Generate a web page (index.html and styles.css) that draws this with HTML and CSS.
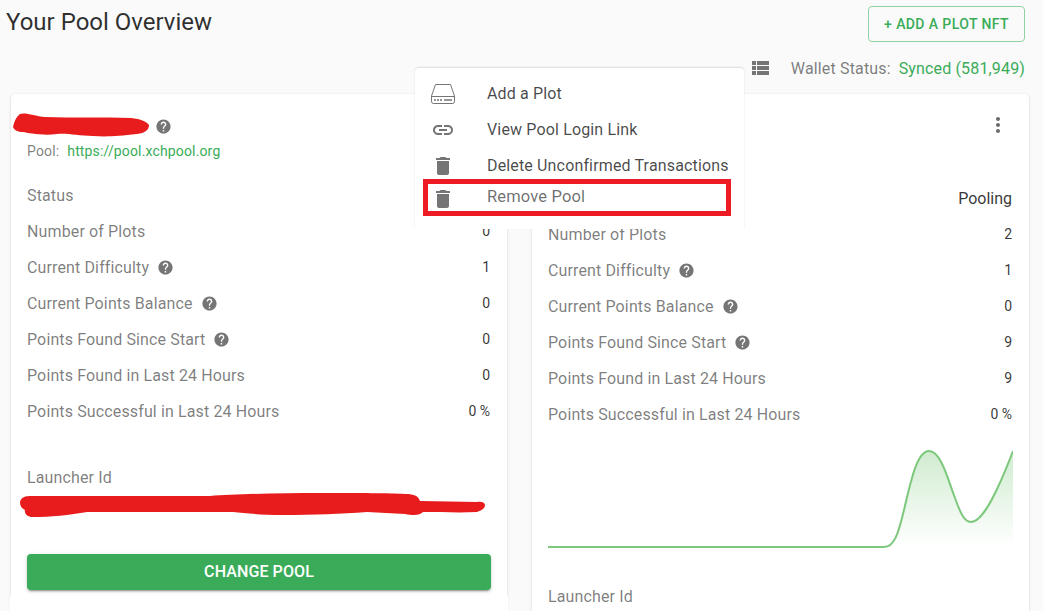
FILE: index.html
```html
<!DOCTYPE html>
<html lang="en">
<head>
<meta charset="utf-8">
<title>Your Pool Overview</title>
<link rel="stylesheet" href="styles.css">
</head>
<body>
<svg class="defs" width="0" height="0"><defs><path id="q" d="M12 2C6.480 2 2 6.480 2 12s4.480 10 10 10 10-4.480 10-10S17.520 2 12 2zm1 17h-2v-2h2v2zm2.070-7.750l-.9.920C13.450 12.900 13 13.500 13 15h-2v-.5c0-1.100.45-2.100 1.170-2.830l1.240-1.260c.37-.36.59-.86.59-1.410 0-1.100-.9-2-2-2s-2 .9-2 2H8c0-2.210 1.790-4 4-4s4 1.790 4 4c0 .88-.36 1.680-.93 2.250z"/></defs></svg>
<main class="page">
  <header class="top">
    <h1 class="page-title">Your Pool Overview</h1>
    <button class="outline-btn">+ Add a Plot NFT</button>
  </header>
  <div class="status-bar">
    <svg class="list-icon" viewBox="0 0 24 24"><path d="M4 14h4v-4H4v4zm0 5h4v-4H4v4zM4 9h4V5H4v4zm5 5h12v-4H9v4zm0 5h12v-4H9v4zM9 5v4h12V5H9z"/></svg>
    <span class="wallet-label">Wallet Status:</span>
    <span class="wallet-value">Synced (581,949)</span>
  </div>
  <section class="cards">
    <article class="card card-left">
      <div class="card-head">
        <svg class="help help-title" viewBox="0 0 24 24"><use href="#q"/></svg>
      </div>
      <div class="pool-line"><span class="pool-label">Pool:</span><span class="pool-url">https://pool.xchpool.org</span></div>
      <div class="rows rows-left">
        <div class="row"><span class="label">Status</span></div>
        <div class="row"><span class="label">Number of Plots</span><span class="value">0</span></div>
        <div class="row"><span class="label">Current Difficulty<svg class="help" viewBox="0 0 24 24"><use href="#q"/></svg></span><span class="value">1</span></div>
        <div class="row"><span class="label">Current Points Balance<svg class="help" viewBox="0 0 24 24"><use href="#q"/></svg></span><span class="value">0</span></div>
        <div class="row"><span class="label">Points Found Since Start<svg class="help" viewBox="0 0 24 24"><use href="#q"/></svg></span><span class="value">0</span></div>
        <div class="row"><span class="label">Points Found in Last 24 Hours</span><span class="value">0</span></div>
        <div class="row"><span class="label">Points Successful in Last 24 Hours</span><span class="value">0 %</span></div>
      </div>
      <div class="launcher launcher-left">Launcher Id</div>
      <div class="launcher-gap"></div>
      <button class="change-btn">Change Pool</button>
    </article>
    <article class="card card-right">
      <div class="card-head card-head-right">
        <svg class="more" viewBox="0 0 24 24"><path d="M12 8c1.100 0 2-.9 2-2s-.9-2-2-2-2 .9-2 2 .9 2 2 2zm0 2c-1.100 0-2 .9-2 2s.9 2 2 2 2-.9 2-2-.9-2-2-2zm0 6c-1.100 0-2 .9-2 2s.9 2 2 2 2-.9 2-2-.9-2-2-2z"/></svg>
      </div>
      <div class="pool-line"></div>
      <div class="rows rows-right">
        <div class="row row-end"><span class="value-big">Pooling</span></div>
        <div class="row"><span class="label">Number of Plots</span><span class="value">2</span></div>
        <div class="row"><span class="label">Current Difficulty<svg class="help" viewBox="0 0 24 24"><use href="#q"/></svg></span><span class="value">1</span></div>
        <div class="row"><span class="label">Current Points Balance<svg class="help" viewBox="0 0 24 24"><use href="#q"/></svg></span><span class="value">0</span></div>
        <div class="row"><span class="label">Points Found Since Start<svg class="help" viewBox="0 0 24 24"><use href="#q"/></svg></span><span class="value">9</span></div>
        <div class="row"><span class="label">Points Found in Last 24 Hours</span><span class="value">9</span></div>
        <div class="row"><span class="label">Points Successful in Last 24 Hours</span><span class="value">0 %</span></div>
      </div>
      <svg class="chart" viewBox="0 0 465 100" preserveAspectRatio="none">
        <defs>
          <linearGradient id="fade" x1="0" y1="0" x2="0" y2="1">
            <stop offset="0" stop-color="#7cc87c" stop-opacity=".36"/>
            <stop offset="1" stop-color="#7cc87c" stop-opacity="0"/>
          </linearGradient>
        </defs>
        <path fill="url(#fade)" d="M336 97C346 97 350 85 356 60C364 25 370 1 381 1C393 1 400 30 407 48C412 62 416 72 423 72C436 72 452 35 465 1V97Z"/>
        <path fill="none" stroke="#7cc87c" stroke-width="2" d="M0 97H336C346 97 350 85 356 60C364 25 370 1 381 1C393 1 400 30 407 48C412 62 416 72 423 72C436 72 452 35 465 1"/>
      </svg>
      <div class="launcher">Launcher Id</div>
    </article>
  </section>
</main>

<nav class="menu">
  <div class="menu-item">
    <svg class="menu-icon drive" viewBox="0 0 24 20"><path fill="none" stroke="#757575" stroke-width="1" d="M4.500 .5h15L23.500 12v5.500a2 2 0 0 1-2 2h-19a2 2 0 0 1-2-2V12zM.5 12.500h23"/><path fill="#757575" d="M3 15.300h2v1.400H3zM6 15.300h2v1.400H6zM9 15.300h2v1.400H9zM13 15.300h8v1.400h-8z"/></svg>
    <span>Add a Plot</span>
  </div>
  <div class="menu-item">
    <svg class="menu-icon" viewBox="0 0 24 24"><path fill="#757575" d="M3.900 12c0-1.710 1.390-3.100 3.100-3.100h4V7H7c-2.760 0-5 2.240-5 5s2.240 5 5 5h4v-1.900H7c-1.710 0-3.100-1.390-3.100-3.100zM8 13h8v-2H8v2zm9-6h-4v1.900h4c1.710 0 3.100 1.390 3.100 3.100s-1.390 3.100-3.100 3.100h-4V17h4c2.760 0 5-2.240 5-5s-2.240-5-5-5z"/></svg>
    <span>View Pool Login Link</span>
  </div>
  <div class="menu-item">
    <svg class="menu-icon" viewBox="0 0 24 24"><path fill="#757575" d="M6 19c0 1.100.9 2 2 2h8c1.100 0 2-.9 2-2V7H6v12zM19 4h-3.500l-1-1h-5l-1 1H5v2h14V4z"/></svg>
    <span>Delete Unconfirmed Transactions</span>
  </div>
  <div class="menu-item menu-item-last">
    <svg class="menu-icon" viewBox="0 0 24 24"><path fill="#757575" d="M6 19c0 1.100.9 2 2 2h8c1.100 0 2-.9 2-2V7H6v12zM19 4h-3.500l-1-1h-5l-1 1H5v2h14V4z"/></svg>
    <span>Remove Pool</span>
  </div>
</nav>
<div class="highlight"></div>

<svg class="scribble scribble-name" viewBox="0 0 136 24"><path fill="#e81c1c" d="M0 14C1 9 3 4 7 1C12-1 22 3 32 4C60 5 90 4 118 5C128 6 134 9 136 12C136 17 132 20 124 21C105 23 95 24 80 23C65 23 55 20 44 21C30 23 15 20 10 19C5 19 1 17 0 14Z"/></svg>
<svg class="scribble scribble-id" viewBox="0 0 466 24"><path fill="#e81c1c" d="M0 9C1 4 5 3 12 3H190C215 1 260 0 300 0C340 0 370 0 385 1C395 1 398 3 400 8L457 9C462 8 465 10 465 12C465 16 460 18 457 19C440 20 420 19 403 19C400 22 395 23 385 21L347 19C320 21 295 22 263 22C240 22 225 20 213 19C170 19 120 19 67 19C50 22 30 24 13 24C7 24 4 20 5 17C1 15 0 12 0 9Z"/></svg>
</body>
</html>
```
FILE: styles.css
```css
* { box-sizing: border-box; }
html, body { margin: 0; height: 611px; overflow: hidden; }
body {
  background: #fafafa;
  font-family: Roboto, "Liberation Sans", sans-serif;
  color: rgba(0, 0, 0, .87);
  position: relative;
}
.page { padding: 0 14px 0 11px; }
.top {
  display: flex;
  justify-content: space-between;
  align-items: flex-start;
  margin-left: -5px;
  margin-right: -10px;
  padding: 6px 14px 0 0;
  height: 52px;
}
.page-title { margin: 0; font-size: 24px; font-weight: 400; line-height: 32px; color: rgba(0,0,0,.82); }
.outline-btn {
  width: 157px;
  height: 36px;
  border: 1px solid #8fd3a3;
  border-radius: 4px;
  background: transparent;
  color: #3aac59;
  font: 500 14px/1 Roboto, sans-serif;
  letter-spacing: .4px;
  text-transform: uppercase;
}
.status-bar {
  display: flex;
  justify-content: flex-end;
  align-items: center;
  height: 32px;
  margin-right: 4px;
  font-size: 16px;
  letter-spacing: .15px;
}
.list-icon { width: 24px; height: 24px; fill: #757575; margin-right: 19px; }
.wallet-label { color: rgba(0,0,0,.52); margin-right: 8px; }
.wallet-value { color: #3aac59; }
.cards {
  margin-top: 10px;
  display: grid;
  grid-template-columns: 496px 497px;
  gap: 25px;
  height: 517px;
}
.card {
  position: relative;
  background: #fff;
  border-radius: 4px 4px 0 0;
  box-shadow: 0 1px 3px rgba(0,0,0,.14), 0 0 1px rgba(0,0,0,.1);
  padding: 16px 16px 0;
  display: flex;
  flex-direction: column;
}
.card-left::after {
  content: "";
  position: absolute;
  left: -1px;
  right: -1px;
  bottom: 0;
  height: 15px;
  background: #fff;
}
.card-right { padding-right: 17px; }
.card-head { height: 32px; display: flex; align-items: center; padding-left: 128px; }
.card-head-right { justify-content: flex-end; padding-right: 2px; height: 30px; margin-bottom: 2px; }
.help { width: 17px; height: 17px; fill: #757575; margin-left: 8px; flex: none; }
.help-title { margin-left: 0; }
.more { width: 24px; height: 24px; fill: #6b6b6b; }
.pool-line { height: 18px; display: flex; align-items: center; font-size: 14px; letter-spacing: .15px; }
.pool-label { color: rgba(0,0,0,.52); margin-right: 8px; }
.pool-url { color: #3aac59; }
.rows { margin-top: 17px; }
.rows-left { margin-right: 1px; }
.rows-right { margin-top: 20px; }
.row { height: 36px; display: flex; align-items: center; justify-content: space-between; }
.row-end { justify-content: flex-end; }
.label { display: flex; align-items: center; font-size: 16px; letter-spacing: .13px; color: rgba(0,0,0,.52); }
.value { font-size: 14px; color: rgba(0,0,0,.8); }
.value-big { font-size: 16px; color: rgba(0,0,0,.8); }
.launcher { height: 20px; line-height: 20px; font-size: 16px; letter-spacing: .13px; color: rgba(0,0,0,.52); }
.launcher-left { margin-top: 39px; }
.launcher-gap { height: 66px; }
.change-btn {
  height: 36px;
  width: 100%;
  flex: none;
  border: 0;
  border-radius: 4px;
  background: #3aac59;
  color: #fff;
  font: 500 16px/1 Roboto, sans-serif;
  letter-spacing: .1px;
  text-transform: uppercase;
  box-shadow: 0 3px 1px -2px rgba(0,0,0,.2), 0 2px 2px rgba(0,0,0,.14), 0 1px 5px rgba(0,0,0,.12);
}
.chart { display: block; flex: none; width: 465px; height: 100px; margin: 18px 0 37px; }
.defs { position: absolute; }
.menu {
  position: absolute;
  left: 415px;
  top: 68px;
  width: 329px;
  height: 161px;
  background: #fff;
  border-radius: 4px 4px 0 0;
  box-shadow: 0 -1px 2px rgba(0,0,0,.12);
  padding-top: 7px;
}
.menu-item {
  height: 36px;
  display: flex;
  align-items: center;
  padding-left: 16px;
  font-size: 16px;
  letter-spacing: .15px;
  color: rgba(0,0,0,.72);
}
.menu-item-last { height: 28px; margin-top: -1px; color: rgba(0,0,0,.58); font-size: 16.5px; }
.menu-icon { width: 24px; height: 24px; margin: 2px 32px 0 0; flex: none; }
.menu-item-last .menu-icon { margin-top: 6px; }
.menu-icon.drive { height: 20px; }
.highlight {
  position: absolute;
  left: 423px;
  top: 179px;
  width: 308px;
  height: 37px;
  border: 5px solid #ed1c24;
}
.scribble { position: absolute; display: block; }
.scribble-name { left: 13px; top: 113px; width: 136px; height: 24px; }
.scribble-id { left: 20px; top: 493px; width: 466px; height: 24px; }
```
